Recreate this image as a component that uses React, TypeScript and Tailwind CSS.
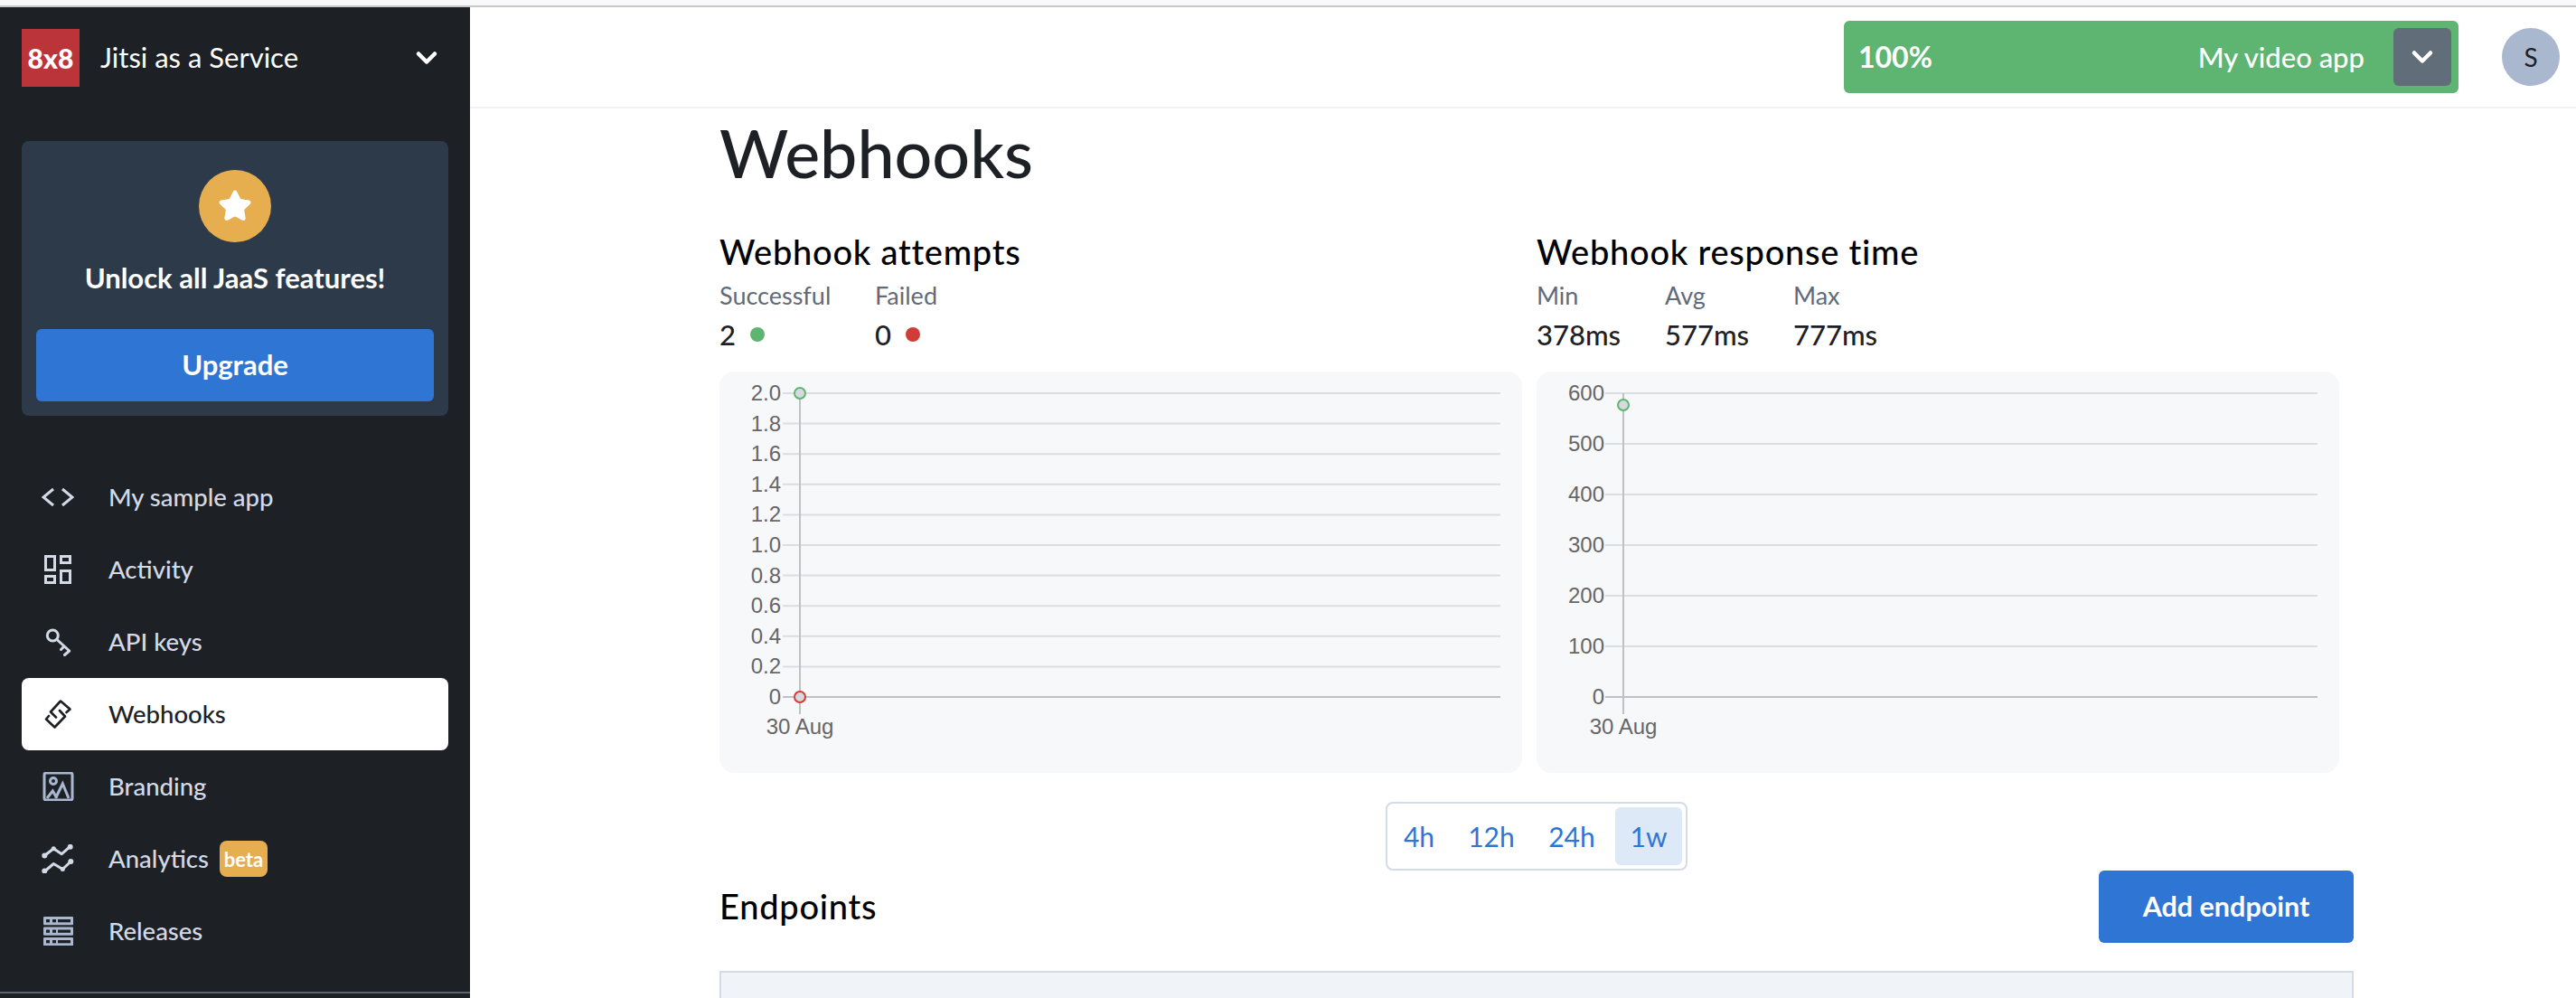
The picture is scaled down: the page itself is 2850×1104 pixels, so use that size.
import React from 'react';
import { ChevronDown, Star } from 'lucide-react';

const font = { fontFamily: 'Lato, sans-serif' };

const CodeIcon = () => (
  <svg width="36" height="32" viewBox="0 0 36 32" fill="none" stroke="currentColor" strokeWidth="3">
    <polyline points="13,7 2,16 13,25" />
    <polyline points="23,7 34,16 23,25" />
  </svg>
);

const ActivityIcon = () => (
  <svg width="36" height="32" viewBox="0 0 36 32" fill="none" stroke="currentColor" strokeWidth="3">
    <rect x="4.5" y="1.5" width="10" height="15" />
    <rect x="21.5" y="1.5" width="10" height="7" />
    <rect x="4.5" y="23.5" width="10" height="7" />
    <rect x="21.5" y="17.5" width="10" height="13" />
  </svg>
);

const KeyIcon = () => (
  <svg width="36" height="32" viewBox="0 0 36 32" fill="none" stroke="currentColor" strokeWidth="3" strokeLinecap="round" strokeLinejoin="round">
    <circle cx="12.3" cy="9" r="6" />
    <path d="M17 13.5 L30.7 26 L25.5 30.5 M25 21 L21.5 24.5" />
  </svg>
);

const WebhookIcon = () => (
  <svg width="36" height="32" viewBox="0 0 36 32" fill="none" stroke="currentColor" strokeWidth="2.6" strokeLinecap="round" strokeLinejoin="round">
    <path d="M27.5 14 L31.5 10.5 L21 1.5 L10 13.5 L16 19.5" />
    <path d="M20 12 L26 18.5 L14.5 30.5 L5 21.5 L8 18" />
  </svg>
);

const ImageIcon = () => (
  <svg width="36" height="32" viewBox="0 0 36 32" fill="none" stroke="#a9b8cf" strokeWidth="3">
    <rect x="3" y="1" width="31" height="30" rx="2" />
    <circle cx="13" cy="10" r="3.5" />
    <path d="M6 29 L12.3 21 L17 29 M15.5 29 L23.3 13 L30 29" />
  </svg>
);

const AnalyticsIcon = () => (
  <svg width="36" height="32" viewBox="0 0 36 32" fill="none" stroke="#d3dae6" strokeWidth="3" strokeLinecap="round" strokeLinejoin="round">
    <path d="M3.3 12.5 L13.3 4.7 L22.3 10.7 L31.7 2.3" />
    <path d="M3.3 30 L13.3 21.5 L23.3 27.5 L32.3 19" />
    <g fill="#d3dae6" stroke="none">
      <circle cx="3.3" cy="12.5" r="3" />
      <circle cx="13.3" cy="4.7" r="2.5" />
      <circle cx="31.7" cy="2.8" r="3" />
      <circle cx="3.3" cy="29.5" r="3" />
      <circle cx="23.3" cy="27.5" r="2.5" />
      <circle cx="32.3" cy="19" r="3" />
    </g>
  </svg>
);

const ReleasesIcon = () => (
  <svg width="36" height="32" viewBox="0 0 36 32">
    {[0, 11.5, 23].map((y) => (
      <g key={y}>
        <rect x="2" y={y} width="33" height="9.3" rx="1" fill="#a9b8cf" />
        <rect x="5" y={y + 3} width="4" height="3.3" fill="#1d2126" />
        <rect x="12" y={y + 3} width="4" height="3.3" fill="#1d2126" />
        <rect x="18" y={y + 3} width="14" height="3.3" fill="#1d2126" />
      </g>
    ))}
  </svg>
);

const navItems = [
  { label: 'My sample app', icon: <CodeIcon /> },
  { label: 'Activity', icon: <ActivityIcon /> },
  { label: 'API keys', icon: <KeyIcon /> },
  { label: 'Webhooks', icon: <WebhookIcon />, active: true },
  { label: 'Branding', icon: <ImageIcon /> },
  { label: 'Analytics', icon: <AnalyticsIcon />, badge: 'beta' },
  { label: 'Releases', icon: <ReleasesIcon /> },
];

const Sidebar = () => (
  <aside className="w-[520px] shrink-0 h-[1096px] bg-[#1d2126] flex flex-col px-6 pt-6">
    <div className="flex items-center h-16 shrink-0">
      <div className="w-16 h-16 bg-[#bb343a] flex items-center justify-center text-white text-[30px] font-black">8x8</div>
      <span className="ml-[23px] pb-[2px] text-[31px] text-white">Jitsi as a Service</span>
      <ChevronDown size={36} strokeWidth={3} className="ml-auto mr-[6px] text-white" />
    </div>

    <div className="mt-[60px] h-[304px] shrink-0 rounded-lg bg-[#2d3a4a] px-4 pt-8 flex flex-col items-center">
      <div className="w-20 h-20 rounded-full bg-[#e6ae4f] flex items-center justify-center">
        <Star size={38} fill="white" className="text-white" />
      </div>
      <div className="mt-[19px] text-[31px] font-bold text-white leading-10">Unlock all JaaS features!</div>
      <button className="mt-[37px] w-full h-20 pb-[2px] rounded-md bg-[#2f75d4] text-white text-[31px] font-bold">Upgrade</button>
    </div>

    <nav className="mt-[50px] flex flex-col shrink-0">
      {navItems.map((item) => (
        <div
          key={item.label}
          className={`h-20 flex items-center rounded-lg pl-[22px] text-[27.5px] font-medium ${
            item.active ? 'bg-white text-[#1d2126]' : 'text-[#d3dae6]'
          }`}
        >
          <span className="w-9 flex justify-center">{item.icon}</span>
          <span className="ml-[38px]">{item.label}</span>
          {item.badge && (
            <span className="ml-3 h-10 w-[53px] rounded-lg bg-[#e6ae4f] text-white text-[22px] font-bold flex items-center justify-center">
              {item.badge}
            </span>
          )}
        </div>
      ))}
    </nav>
    <div className="mt-[27px] -mx-6 h-[2px] shrink-0 bg-[#5c6670]" />
  </aside>
);

const Header = () => (
  <header className="h-[112px] shrink-0 bg-white border-b-2 border-[#eef1f5] flex items-center justify-end pr-[18px]">
    <div className="w-[680px] h-20 rounded-md bg-[#5eb471] flex items-center pl-4 pr-2 text-white text-[31px]">
      <span className="font-bold text-[32px]">100%</span>
      <span className="ml-auto font-medium">My video app</span>
      <span className="ml-8 w-16 h-16 rounded-md bg-[#616d78] flex items-center justify-center">
        <ChevronDown size={36} strokeWidth={3} />
      </span>
    </div>
    <div className="ml-12 w-16 h-16 rounded-full bg-[#a9b8cf] flex items-center justify-center text-[28px] text-[#1d2126]">S</div>
  </header>
);

type ChartProps = {
  lines: { label: string; y: number }[];
  axisX: number;
  labelX: number;
  gridFrom: number;
  points: { y: number; color: string }[];
};

const Chart = ({ lines, axisX, labelX, gridFrom, points }: ChartProps) => (
  <div className="w-[888px] h-[444px] rounded-2xl bg-[#f7f8fa]">
    <svg width="888" height="444" style={{ fontFamily: '"Liberation Sans", sans-serif' }}>
      {lines.map((l, i) => (
        <g key={l.label}>
          <line x1={gridFrom} x2="864" y1={l.y} y2={l.y} stroke={i === lines.length - 1 ? '#c0c1c6' : '#dcdde1'} strokeWidth="2" />
          <text x={labelX} y={l.y + 8} textAnchor="end" fontSize="24" fill="#666">
            {l.label}
          </text>
        </g>
      ))}
      <line x1={axisX} x2={axisX} y1="24" y2="379" stroke="#c0c1c6" strokeWidth="2" />
      <text x={axisX} y="401" textAnchor="middle" fontSize="24" fill="#666">
        30 Aug
      </text>
      {points.map((p) => (
        <circle key={p.y} cx={axisX} cy={p.y} r="6" fill="#d8d9dc" stroke={p.color} strokeWidth="2" />
      ))}
    </svg>
  </div>
);

const attemptLines = ['2.0', '1.8', '1.6', '1.4', '1.2', '1.0', '0.8', '0.6', '0.4', '0.2', '0'].map((label, i) => ({
  label,
  y: 24 + i * 33.6,
}));
const responseLines = ['600', '500', '400', '300', '200', '100', '0'].map((label, i) => ({ label, y: 24 + i * 56 }));

const Stat = ({ label, children, width }: { label: string; children: React.ReactNode; width: string }) => (
  <div className={width}>
    <div className="text-[27px] leading-8 text-[#5f6b7a]">{label}</div>
    <div className="mt-[11px] text-[31px] leading-8 font-medium text-[#1d2126] flex items-center gap-4">{children}</div>
  </div>
);

export default function App() {
  return (
    <div className="w-[2850px] h-[1104px] overflow-hidden bg-white" style={font}>
      <div className="h-[6px] bg-[#f8f9fb]" />
      <div className="h-[2px] bg-[#c8c8c8]" />
      <div className="flex">
        <Sidebar />
        <div className="flex-1 flex flex-col">
          <Header />
          <main className="ml-[276px] w-[1808px] pt-[5px]">
            <h1 className="text-[73.5px] leading-[88px] font-medium text-[#1d2126]">Webhooks</h1>
            <div className="mt-[43px] flex gap-4">
              <section className="w-[888px]">
                <h2 className="text-[38px] leading-[44px] tracking-[0.75px] font-medium text-black">Webhook attempts</h2>
                <div className="mt-[11px] flex">
                  <Stat label="Successful" width="w-[172px]">
                    2 <span className="w-4 h-4 rounded-full bg-[#5eb471]" />
                  </Stat>
                  <Stat label="Failed" width="w-[172px]">
                    0 <span className="w-4 h-4 rounded-full bg-[#d03c36]" />
                  </Stat>
                </div>
              </section>
              <section className="w-[888px]">
                <h2 className="text-[38px] leading-[44px] tracking-[0.75px] font-medium text-black">Webhook response time</h2>
                <div className="mt-[11px] flex">
                  <Stat label="Min" width="w-[142px]">378ms</Stat>
                  <Stat label="Avg" width="w-[142px]">577ms</Stat>
                  <Stat label="Max" width="w-[142px]">777ms</Stat>
                </div>
              </section>
            </div>
            <div className="mt-[25px] flex gap-4">
              <Chart
                lines={attemptLines}
                axisX={89}
                labelX={68}
                gridFrom={70}
                points={[
                  { y: 24, color: '#5eb471' },
                  { y: 360, color: '#d03c36' },
                ]}
              />
              <Chart lines={responseLines} axisX={96} labelX={75} gridFrom={76} points={[{ y: 37, color: '#5eb471' }]} />
            </div>
            <div className="mt-8 flex justify-center">
              <div className="flex items-center h-[76px] w-[334px] rounded-lg border-2 border-[#d2dbe6] px-1 text-[30px] text-[#2f75d4]">
                <span className="w-[62px] text-center">4h</span>
                <span className="w-[98px] text-center">12h</span>
                <span className="w-[80px] text-center">24h</span>
                <span className="ml-2 w-[74px] h-16 rounded-md bg-[#dde9f7] flex items-center justify-center">1w</span>
              </div>
            </div>
            <div className="flex items-center justify-between h-20">
              <h2 className="pb-[2px] text-[38px] tracking-[0.75px] font-medium text-black">Endpoints</h2>
              <button className="w-[282px] h-20 rounded-md bg-[#2f75d4] text-white text-[30.5px] font-bold">Add endpoint</button>
            </div>
            <div className="mt-[31px] h-20 border-2 border-[#d2dbe6] bg-[#f0f3f8]" />
          </main>
        </div>
      </div>
    </div>
  );
}
